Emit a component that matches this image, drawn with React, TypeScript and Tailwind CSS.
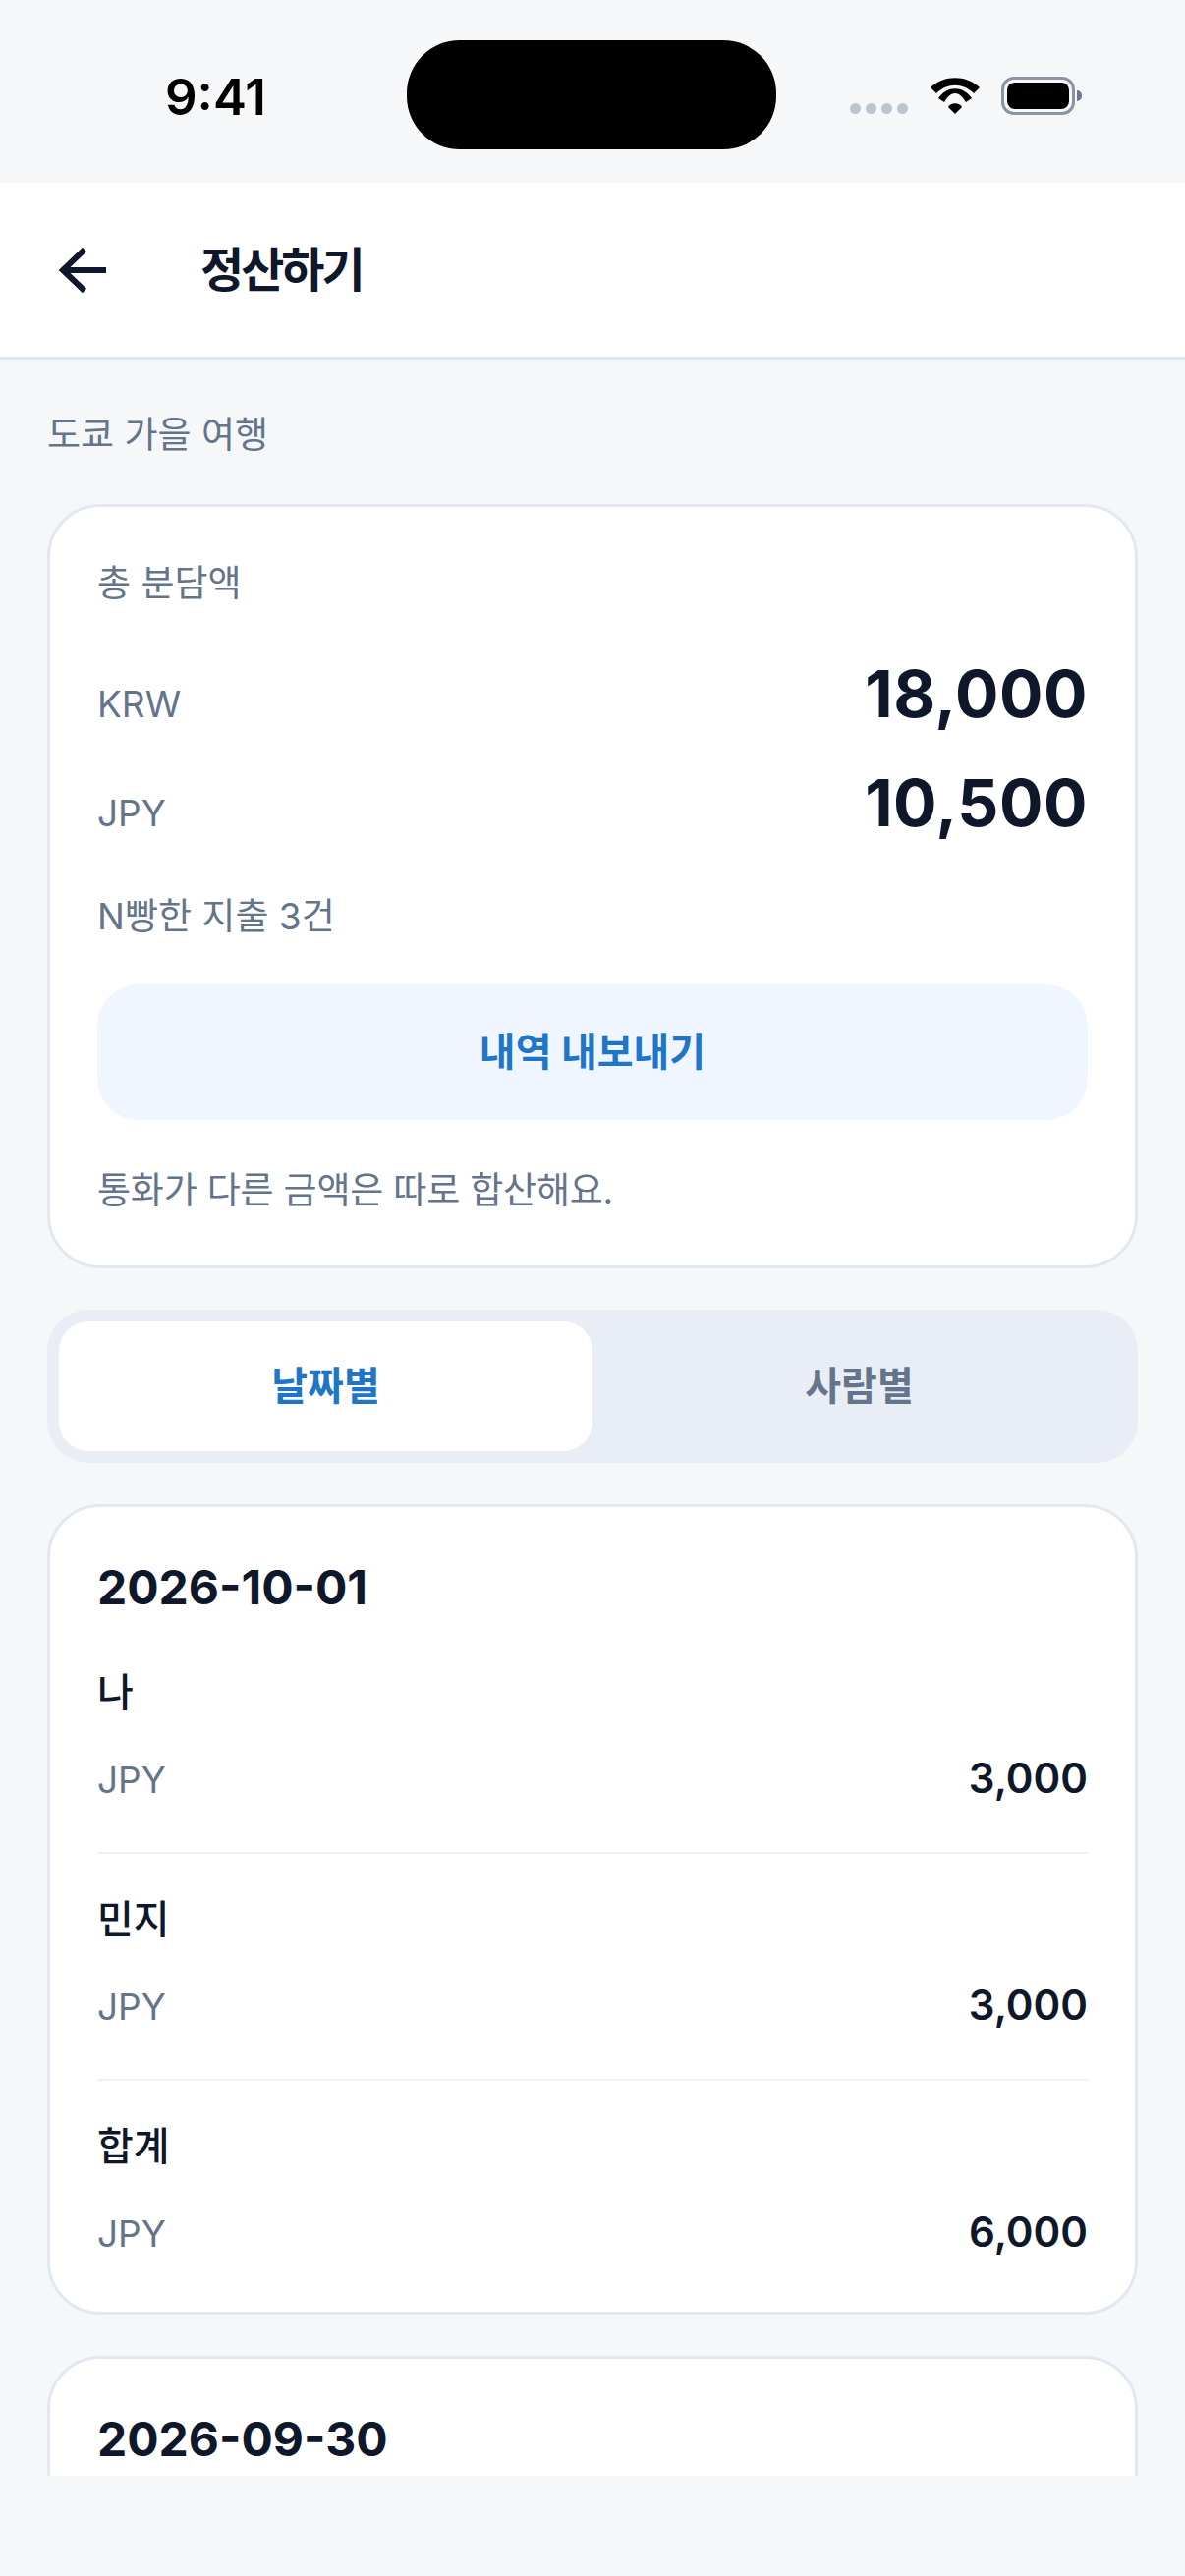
import React from 'react';

const StatusBar = () => (
  <div className="flex h-[186px] shrink-0 bg-[#f6f7f9]">
    <div className="ml-[168px] mt-[67px] w-[246px] text-[51px] leading-[64px] font-semibold text-black">9:41</div>
    <div className="mt-[41px] h-[111px] w-[376px] rounded-[54px] bg-black" />
    <div className="ml-[75px] mt-[78px] flex h-[39px] items-end">
      <div className="mb-[1px] flex gap-[5px]">
        {[0, 1, 2, 3].map(i => (
          <div key={i} className="h-[11px] w-[11px] rounded-full bg-[#bcc4cf]" />
        ))}
      </div>
      <svg width="50" height="37" viewBox="0 0 50 37" className="mb-[1px] ml-[23px]">
        <path d="M0 10C14-3 36-3 50 10L44 16C33 5 17 5 6 16Z" fill="#000" />
        <path d="M8 21C17 8 33 8 42 21L36 25C29 13 21 13 14 25Z" fill="#000" />
        <path d="M18 30C20 25 30 25 32 30L25 37Z" fill="#000" />
      </svg>
      <div className="ml-[22px] flex items-center">
        <div className="h-[39px] w-[75px] rounded-[13px] border-[3px] border-[#8a94a3] p-[3px]">
          <div className="h-full w-full rounded-[8px] bg-black" />
        </div>
        <div className="ml-[2px] h-[11px] w-[5px] rounded-r-full bg-[#6b7a90]" />
      </div>
    </div>
  </div>
);

const Row = ({ name, value }: { name: string; value: string }) => (
  <div>
    <div className="text-[40px] leading-[56px] font-medium text-[#0f172a]">{name}</div>
    <div className="mt-[30px] flex items-baseline justify-between">
      <span className="text-[37px] leading-[58px] text-[#64748b]">JPY</span>
      <span className="text-[42px] leading-[58px] font-semibold text-[#0f172a]">{value}</span>
    </div>
  </div>
);

const Amount = ({ currency, value }: { currency: string; value: string }) => (
  <div className="flex items-baseline justify-between">
    <span className="text-[37px] leading-[56px] text-[#64748b]">{currency}</span>
    <span className="text-[66px] leading-[94px] font-bold tracking-[0.5px] text-[#0f172a]">{value}</span>
  </div>
);

export default function App() {
  return (
    <div className="flex h-[2622px] w-[1206px] flex-col overflow-hidden bg-[#f6f7f9] font-['Inter','Noto_Sans_CJK_KR',sans-serif]">
      <StatusBar />
      <div className="flex h-[180px] shrink-0 items-center border-b-[3px] border-[#e2e8f0] bg-white pl-[48px]">
        <svg width="72" height="72" viewBox="0 0 72 72" fill="none" stroke="#0f172a" strokeWidth="6">
          <path d="M60 36H16M38 15 16 36l22 21" />
        </svg>
        <h1 className="ml-[84px] text-[48px] font-bold tracking-[-3px] text-[#0f172a]">정산하기</h1>
      </div>
      <div className="h-[2154px] flex-none overflow-hidden px-[48px] pt-[48px]">
        <div className="text-[37px] leading-[58px] text-[#64748b]">도쿄 가을 여행</div>
        <div className="mt-[41px] rounded-[54px] border-[3px] border-[#e2e8f0] bg-white p-[48px]">
          <div className="text-[37px] leading-[60px] text-[#64748b]">총 분담액</div>
          <div className="mt-[35px] flex flex-col gap-[17px]">
            <Amount currency="KRW" value="18,000" />
            <Amount currency="JPY" value="10,500" />
          </div>
          <div className="mt-[41px] text-[37px] leading-[56px] text-[#64748b]">N빵한 지출 3건</div>
          <div className="mt-[41px] flex h-[138px] items-center justify-center rounded-[42px] bg-[#eff6ff] text-[40px] font-bold text-[#1f76c8]">
            내역 내보내기
          </div>
          <div className="mt-[44px] text-[37px] leading-[56px] tracking-[-0.2px] text-[#64748b]">통화가 다른 금액은 따로 합산해요.</div>
        </div>
        <div className="mt-[42px] flex h-[156px] rounded-[42px] bg-[#e9eef6] p-[12px]">
          <div className="flex flex-1 items-center justify-center rounded-[30px] bg-white text-[40px] font-bold text-[#1f76c8]">날짜별</div>
          <div className="flex flex-1 items-center justify-center text-[40px] font-bold text-[#64748b]">사람별</div>
        </div>
        <div className="mt-[42px] rounded-[54px] border-[3px] border-[#e2e8f0] bg-white px-[48px] pb-[50px] pt-[48px]">
          <div className="text-[48px] leading-[67px] font-bold text-[#0f172a]">2026-10-01</div>
          <div className="mt-[46px] flex flex-col">
            <Row name="나" value="3,000" />
            <div className="mb-[39px] mt-[44px] h-[2px] bg-[#eef2f7]" />
            <Row name="민지" value="3,000" />
            <div className="mb-[39px] mt-[44px] h-[2px] bg-[#eef2f7]" />
            <Row name="합계" value="6,000" />
          </div>
        </div>
        <div className="mt-[42px] rounded-[54px] border-[3px] border-[#e2e8f0] bg-white p-[48px]">
          <div className="text-[48px] leading-[67px] font-bold text-[#0f172a]">2026-09-30</div>
          <div className="h-[300px]" />
        </div>
      </div>
    </div>
  );
}
